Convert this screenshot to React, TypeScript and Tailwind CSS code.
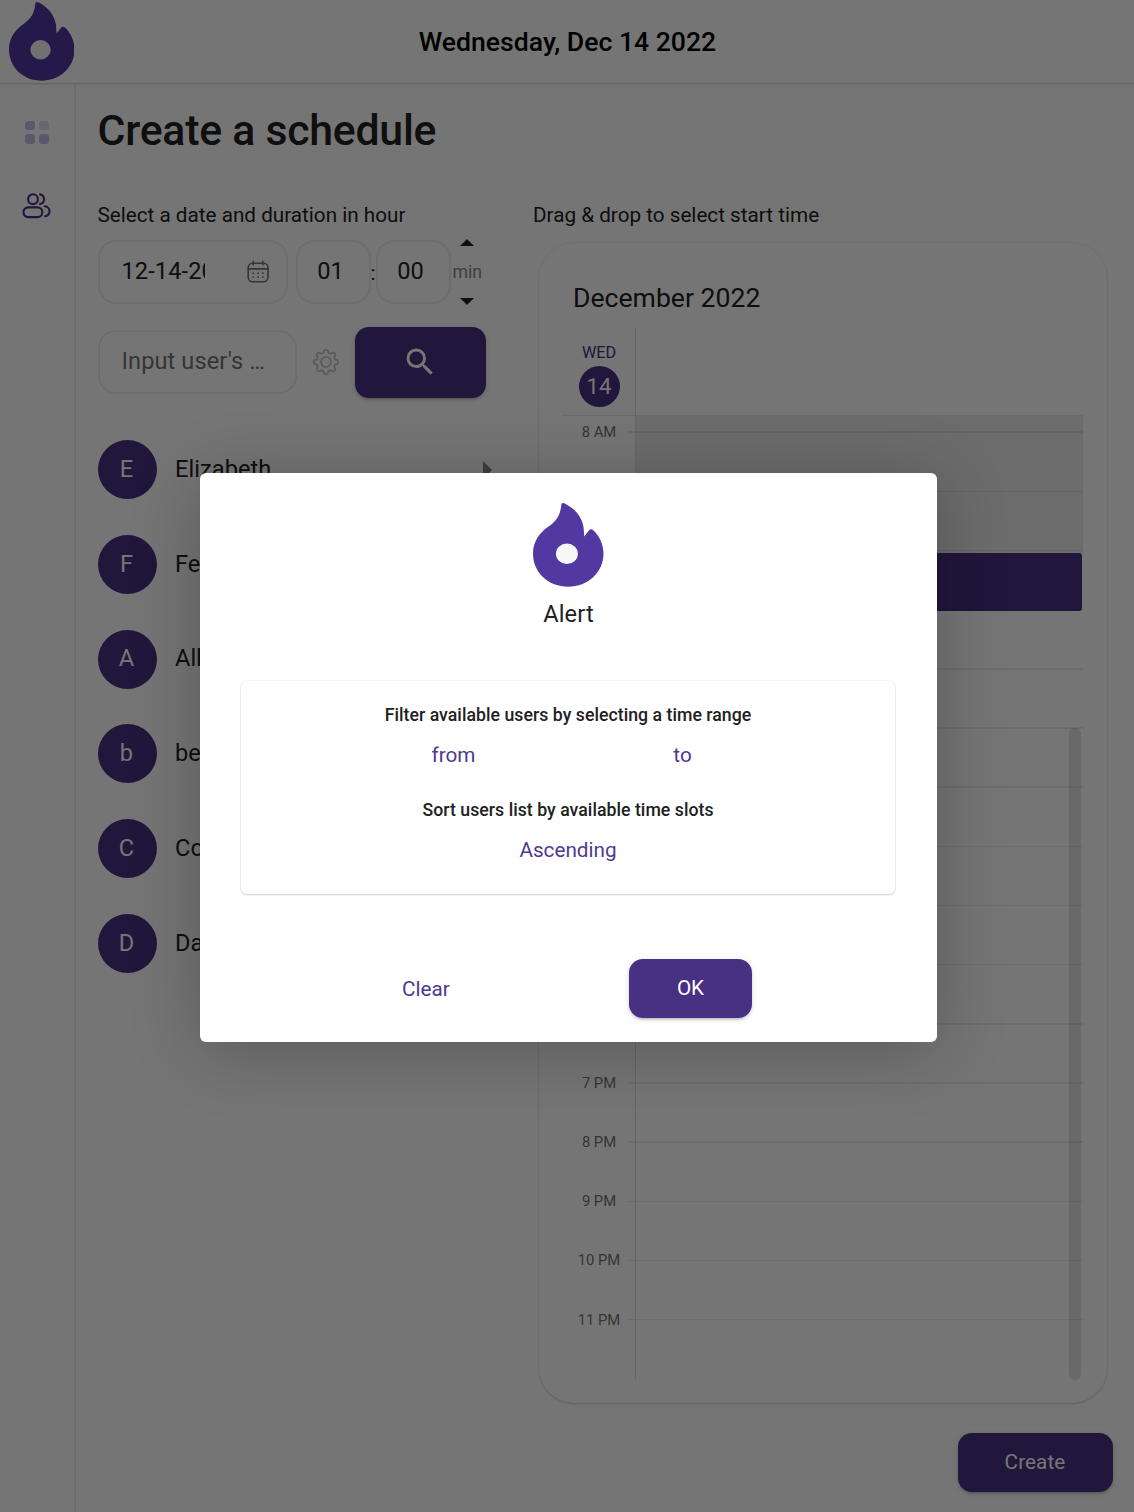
import React from "react";

const users = ["Elizabeth", "Felix", "Albert", "ben", "Connor", "Daniel"];
const hours = ["8 AM", "9 AM", "10 AM", "11 AM", "12 PM", "1 PM", "2 PM", "3 PM", "4 PM", "5 PM", "6 PM", "7 PM", "8 PM", "9 PM", "10 PM", "11 PM"];

function Flame({ className }: { className: string }) {
  return (
    <svg className={className} viewBox="99 68 212 253" preserveAspectRatio="none">
      <path
        fill="#5238a0"
        d="M184 74C185 68 190 67 196 70C230 88 252 118 252 154L253 169L267 151Q273 144 280 150C300 168 311 195 311 220C311 277 264 320 205 320C146 320 99 278 99 220C99 186 117 158 147 138C170 122 181 105 184 74Z"
      />
      <ellipse cx="201" cy="221" rx="33" ry="31" fill="#f7f7f7" />
    </svg>
  );
}

function UsersIcon() {
  return (
    <svg className="h-[28px] w-[30px]" viewBox="0 0 30 28" fill="none" stroke="#483082" strokeWidth="2.1" strokeLinecap="round">
      <circle cx="11" cy="7.2" r="4.9" />
      <rect x="1.5" y="15.4" width="18.8" height="9.7" rx="4.6" />
      <path d="M18.1 2.4A4.9 4.9 0 0 1 18.1 12" />
      <path d="M22.7 14.3C25.5 14.6 27.6 16.7 27.6 19.2C27.6 21.7 25.5 23.7 23.1 24.2" />
    </svg>
  );
}

function CalendarIcon() {
  return (
    <svg className="h-[24px] w-[24px]" viewBox="0 0 24 24" fill="none" stroke="#747474" strokeWidth="1.6" strokeLinecap="round">
      <rect x="2.2" y="3.2" width="19.8" height="18.6" rx="4.5" />
      <path d="M2.4 8.9H21.8M7.2 1.3V4.8M16.8 1.3V4.8" />
      <path d="M7.2 13.2h.1M12.1 13.2h.1M16.9 13.2h.1M7.2 17.1h.1M12.1 17.1h.1M16.9 17.1h.1" strokeWidth="1.7" />
    </svg>
  );
}

function GearIcon() {
  const points: string[] = [];
  for (let i = 0; i < 128; i++) {
    const a = (i / 128) * Math.PI * 2;
    const wave = Math.cos(a * 8);
    const r = 10.7 + 1.4 * Math.tanh(wave * 2.2);
    points.push(`${(13 + r * Math.cos(a)).toFixed(2)},${(13 + r * Math.sin(a)).toFixed(2)}`);
  }
  return (
    <svg className="h-[26px] w-[26px]" viewBox="0 0 26 26" fill="none" stroke="#c4c4c4" strokeWidth="1.7" strokeLinejoin="round">
      <polygon points={points.join(" ")} />
      <circle cx="13" cy="13" r="5" />
    </svg>
  );
}

const shadowBtn = "shadow-[0_4px_2px_-3px_rgba(0,0,0,0.12),0_2px_3px_rgba(0,0,0,0.12),0_1px_7px_rgba(0,0,0,0.1)]";
const field = "flex h-[64px] items-center rounded-[18px] border-2 border-[#ededed] text-[23.6px] tracking-[0.1px]";

function Header() {
  return (
    <header className="flex h-[84px] items-center border-b border-[#dedede] shadow-[0_1px_1px_rgba(0,0,0,0.06)]">
      <div className="w-[75px] pl-[8.5px]">
        <Flame className="h-[79px] w-[65.5px]" />
      </div>
      <h1 className="flex-1 pt-px pr-[74px] text-center text-[26.6px] font-medium text-black">Wednesday, Dec 14 2022</h1>
    </header>
  );
}

function Sidebar() {
  return (
    <nav className="flex w-[76px] shrink-0 flex-col items-center border-r-2 border-[#efefef] pt-[36.5px]">
      <div className="grid grid-cols-2 gap-[3.5px]">
        <span className="size-[9.8px] rounded-[3px] bg-[#c9bdea]" />
        <span className="size-[9.8px] rounded-[3px] bg-[#e4dff0]" />
        <span className="size-[9.8px] rounded-[3px] bg-[#c9bdea]" />
        <span className="size-[9.8px] rounded-[3px] bg-[#c9bdea]" />
      </div>
      <div className="mt-[48px]">
        <UsersIcon />
      </div>
    </nav>
  );
}

function Controls() {
  return (
    <div>
      <div className="flex">
        <div className={`${field} w-[190px] pl-[22px]`}>
          <span className="w-[83px] overflow-hidden whitespace-nowrap">12-14-2022</span>
          <span className="ml-[41.5px]"><CalendarIcon /></span>
        </div>
        <div className={`${field} ml-[8px] w-[75px] justify-center pr-[5px]`}>01</div>
        <span className="w-[5px] pt-[18px] text-center text-[20.7px]">:</span>
        <div className={`${field} w-[75px] justify-center pr-[5px]`}>00</div>
        <div className="-my-px flex w-[33.5px] flex-col items-center justify-between">
          <svg className="h-[7px] w-[14px]" viewBox="0 0 14 7"><path d="M0 7L7 0L14 7Z" fill="#212121" /></svg>
          <span className="text-[17.7px] text-[#8a8a8a]">min</span>
          <svg className="h-[7px] w-[14px]" viewBox="0 0 14 7"><path d="M0 0L7 7L14 0Z" fill="#212121" /></svg>
        </div>
      </div>
      <div className="mt-[22.5px] flex items-center">
        <div className={`${field} w-[199px] pl-[22px] text-[#757575]`}>Input user's …</div>
        <span className="ml-[16px]"><GearIcon /></span>
        <button className={`ml-[16px] flex h-[71px] w-[131px] items-center justify-center rounded-[14px] bg-[#483082] ${shadowBtn}`}>
          <svg className="size-[36px]" viewBox="0 0 24 24" fill="#fff">
            <path d="M15.5 14h-.79l-.28-.27A6.471 6.471 0 0 0 16 9.5 6.5 6.5 0 1 0 9.5 16c1.61 0 3.09-.59 4.23-1.57l.27.28v.79l5 4.99L20.49 19l-4.99-5zm-6 0C7.01 14 5 11.99 5 9.5S7.01 5 9.5 5 14 7.01 14 9.5 11.99 14 9.5 14z" />
          </svg>
        </button>
      </div>
    </div>
  );
}

function Schedule() {
  return (
    <section className="ml-[6px] h-[1160px] w-[568px] rounded-[35px] bg-white pt-[37px] pr-[24px] pl-[23px] shadow-[0_0_1px_1px_rgba(0,0,0,0.04),0_1px_2px_rgba(0,0,0,0.16)]">
      <h3 className="pl-[11px] text-[26.6px] leading-[36px]">December 2022</h3>
      <div className="mt-[12px] flex h-[86.5px]">
        <div className="flex w-[73px] shrink-0 flex-col items-center pt-[15px] pl-px">
          <span className="text-[16.2px] leading-[20px] text-[#483082]">WED</span>
          <span className="mt-[3px] flex size-[41px] items-center justify-center rounded-full bg-[#483082] text-[22.1px] text-white">14</span>
        </div>
        <div className="w-px bg-[#e0e0e0]" />
      </div>
      <div className="relative h-[965px] overflow-hidden border-t-[1.5px] border-[#e6e6e6]">
        <div className="absolute top-0 right-0 left-[73px] h-[137px] bg-[#ebebeb]" />
        <div className="absolute top-0 bottom-0 left-[73px] w-px bg-[#e0e0e0]" />
        <div className="absolute top-[137.5px] right-px left-[75px] h-[57.5px] rounded-[3px] bg-[#483082]" />
        <div className="-mt-[13px]">
          {hours.map((hour) => (
            <div key={hour} className="flex h-[59.18px] items-center">
              <span className="w-[73px] shrink-0 pl-px text-center text-[14.8px] leading-[20px] text-[#757575]">{hour}</span>
              <span className="relative -ml-[7px] h-[1.5px] flex-1 bg-black/8" />
            </div>
          ))}
        </div>
        <div className="absolute right-[2px] bottom-0 h-[652px] w-[12px] rounded-[5px] bg-black/10" />
      </div>
    </section>
  );
}

function AlertDialog() {
  return (
    <div className="mt-[3px] flex h-[569px] w-[737px] flex-col items-center rounded-[6px] bg-white pt-[29.5px] shadow-[0_8px_70px_rgba(0,0,0,0.24)]">
      <Flame className="h-[84px] w-[70.5px]" />
      <h2 className="mt-[9px] text-[23.6px] leading-[36px] tracking-[0.1px]">Alert</h2>
      <div className="mt-[49.5px] mr-px flex h-[213px] w-[654px] flex-col rounded-[6px] pt-[21.5px] text-center shadow-[0_0_2px_rgba(0,0,0,0.13),0_1px_2px_rgba(0,0,0,0.15)]">
        <p className="text-[17.7px] leading-[24px] font-medium tracking-[0.03px]">Filter available users by selecting a time range</p>
        <div className="mt-[13px] grid grid-cols-2 px-[98px] text-[20.7px] leading-[30px] text-[#4f3990]">
          <span>from</span>
          <span>to</span>
        </div>
        <p className="mt-[28px] text-[17.7px] leading-[24px] font-medium tracking-[0.03px]">Sort users list by available time slots</p>
        <span className="mt-[13px] text-[20.7px] leading-[30px] text-[#4f3990]">Ascending</span>
      </div>
      <div className="mt-[65px] flex w-full items-center pl-[202px] text-[20.7px]">
        <button className="pt-[2px] text-[#4f3990]">Clear</button>
        <button className={`ml-auto mr-[185px] h-[59px] w-[123px] rounded-[14px] bg-[#483082] pt-px text-white ${shadowBtn}`}>OK</button>
      </div>
    </div>
  );
}

export default function App() {
  return (
    <div className="relative flex h-[1512px] w-[1134px] flex-col overflow-hidden bg-white font-[Roboto,sans-serif] text-[#212121]">
      <Header />
      <div className="flex flex-1">
        <Sidebar />
        <main className="flex flex-1 flex-col pl-[21.5px]">
          <h2 className="mt-[21px] text-[42.8px] leading-[50px] font-medium tracking-[-0.25px]">Create a schedule</h2>
          <div className="flex">
            <div className="w-[435.5px] pt-[45px]">
              <p className="text-[20.7px] leading-[30px]">Select a date and duration in hour</p>
              <div className="mt-[10px]"><Controls /></div>
              <ul className="mt-[42.5px] flex flex-col gap-[35.75px]">
                {users.map((name, i) => (
                  <li key={name} className="flex h-[59px] items-center text-[23.6px] tracking-[0.05px]">
                    <span className="flex size-[59px] items-center justify-center rounded-full bg-[#483082] pr-px text-white">{name[0]}</span>
                    <span className="ml-[18.5px]">{name}</span>
                    {i === 0 && (
                      <svg className="mr-[41px] ml-auto h-[18px] w-[9px]" viewBox="0 0 9 18"><path d="M0 0L9 9L0 18Z" fill="#8a8a8a" /></svg>
                    )}
                  </li>
                ))}
              </ul>
            </div>
            <div className="pt-[45px]">
              <p className="mb-[13px] text-[20.7px] leading-[30px]">Drag &amp; drop to select start time</p>
              <Schedule />
              <button className={`mt-[30px] ml-[424.5px] block h-[59px] w-[155px] rounded-[14px] bg-[#483082] pt-px text-[20.7px] tracking-[0.1px] text-white ${shadowBtn}`}>Create</button>
            </div>
          </div>
        </main>
      </div>
      <div className="absolute inset-0 flex items-center justify-center bg-black/54 pl-[3px]">
        <AlertDialog />
      </div>
    </div>
  );
}
